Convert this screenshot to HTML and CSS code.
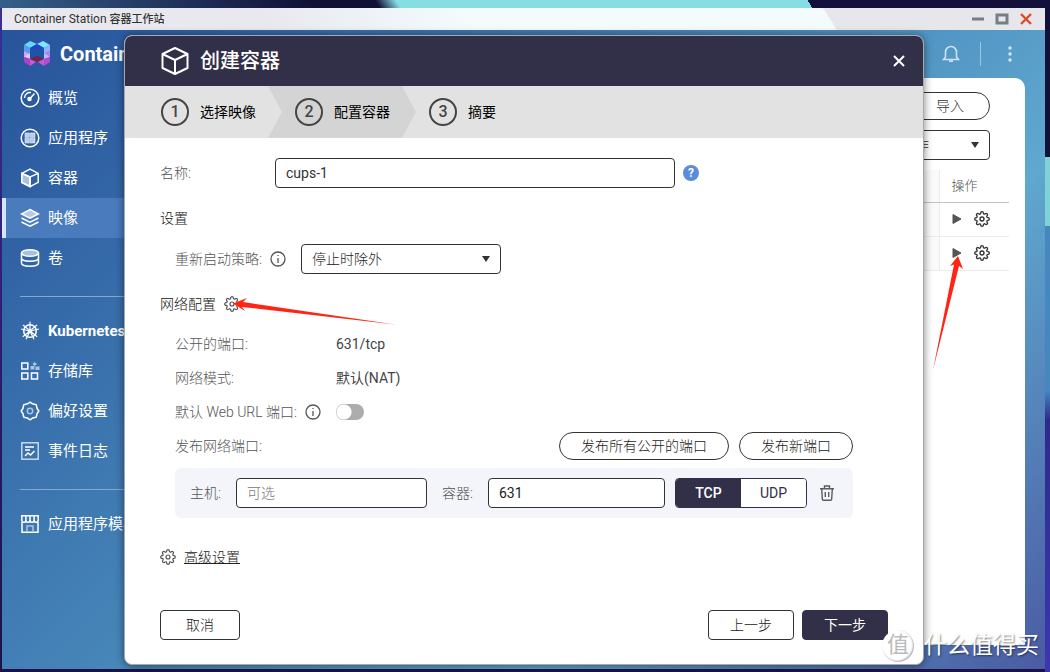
FILE: index.html
```html
<!DOCTYPE html>
<html lang="zh-CN">
<head>
  <meta charset="UTF-8" />
  <meta name="viewport" content="width=device-width, initial-scale=1.0"/>
  <title>Container Station 容器工作站</title>
  <link rel="stylesheet" href="styles.css">
</head>
<body>

  <!-- Shared icons -->
  <svg class="symbols" aria-hidden="true">
    <symbol id="gear" viewBox="0 0 24 24">
      <circle cx="12" cy="12" r="3"/>
      <path d="M19.4 15a1.65 1.65 0 0 0 .33 1.82l.06.06a2 2 0 0 1 0 2.83 2 2 0 0 1-2.83 0l-.06-.06a1.65 1.65 0 0 0-1.82-.33 1.65 1.65 0 0 0-1 1.51V21a2 2 0 0 1-2 2 2 2 0 0 1-2-2v-.09A1.65 1.65 0 0 0 9 19.4a1.65 1.65 0 0 0-1.82.33l-.06.06a2 2 0 0 1-2.83 0 2 2 0 0 1 0-2.83l.06-.06a1.65 1.65 0 0 0 .33-1.82 1.65 1.65 0 0 0-1.51-1H3a2 2 0 0 1-2-2 2 2 0 0 1 2-2h.09A1.65 1.65 0 0 0 4.6 9a1.65 1.65 0 0 0-.33-1.82l-.06-.06a2 2 0 0 1 0-2.83 2 2 0 0 1 2.83 0l.06.06a1.65 1.65 0 0 0 1.82.33H9a1.65 1.65 0 0 0 1-1.51V3a2 2 0 0 1 2-2 2 2 0 0 1 2 2v.09a1.65 1.65 0 0 0 1 1.51 1.65 1.65 0 0 0 1.82-.33l.06-.06a2 2 0 0 1 2.83 0 2 2 0 0 1 0 2.83l-.06.06a1.65 1.65 0 0 0-.33 1.82V9a1.65 1.65 0 0 0 1.51 1H21a2 2 0 0 1 2 2 2 2 0 0 1-2 2h-.09a1.65 1.65 0 0 0-1.51 1z"/>
    </symbol>
    <symbol id="info" viewBox="0 0 16 16">
      <circle cx="8" cy="8" r="7"/>
      <path d="M8 7v5M8 4v1"/>
    </symbol>
    <symbol id="play" viewBox="0 0 10 12">
      <path d="M1 1.500v9L9 6z"/>
    </symbol>
  </svg>

  <div class="window">
    <div class="titlebar">
      <span class="titlebar-text">Container Station <span class="titlebar-cn">容器工作站</span></span>
      <button class="win-btn" aria-label="最小化"><svg width="14" height="14" viewBox="0 0 14 14"><path d="M1 7h12" stroke="#787c85" stroke-width="3"/></svg></button>
      <button class="win-btn" aria-label="最大化"><svg width="14" height="14" viewBox="0 0 14 14"><rect x="2" y="3" width="10" height="8" fill="none" stroke="#787c85" stroke-width="3"/></svg></button>
      <button class="win-btn" aria-label="关闭"><svg width="14" height="14" viewBox="0 0 14 14"><path d="M2 2l10 10M12 2L2 12" stroke="#dc4b2b" stroke-width="2.400"/></svg></button>
    </div>

    <div class="app">
      <header class="app-header">
        <svg class="logo" width="28" height="28" viewBox="0 0 28 28">
          <path d="M1 5l6-4 7 3-7 4z" fill="#5fdcff"/>
          <path d="M14 4l6-3 7 4-6 3z" fill="#7ce6ff"/>
          <path d="M7 8l7-4 7 4-7 2z" fill="#1f45c8"/>
          <path d="M1 5l6 3v6l-6-3z" fill="#5a9cf5"/>
          <path d="M27 5l-6 3v6l6-3z" fill="#8fb4ff"/>
          <path d="M1 11l6 3-6 4z" fill="#c9a7f0"/>
          <path d="M7 9v10l-6-2 6-4z" fill="#e3c6f7"/>
          <path d="M27 11l-6 3 6 4z" fill="#a688ea"/>
          <path d="M21 9v10l6-2-6-4z" fill="#c8b3fa"/>
          <path d="M7 9l7 1 7-1v9H7z" fill="#1c54a6"/>
          <path d="M1 17l6 2v7l-6-4z" fill="#b03fc9"/>
          <path d="M27 17l-6 2v7l6-4z" fill="#b04ad0"/>
          <path d="M7 19l7-3 7 3-7 3z" fill="#7c1e48"/>
          <path d="M7 19v7l6-4zM21 19v7l-6-4z" fill="#c55ad8"/>
        </svg>
        <h1>Container Station</h1>
        <button class="icon-btn" aria-label="通知">
          <svg width="18" height="18" viewBox="0 0 18 18" fill="none" stroke="#d4e6f3" stroke-width="1.500"><path d="M3.500 12V7a5.500 5.500 0 0 1 11 0v5l2 2.500h-15zM7 16.200h4"/></svg>
        </button>
        <span class="header-divider"></span>
        <button class="icon-btn" aria-label="更多">
          <svg width="18" height="18" viewBox="0 0 18 18" fill="#d4e6f3"><circle cx="9" cy="3" r="1.700"/><circle cx="9" cy="9" r="1.700"/><circle cx="9" cy="15" r="1.700"/></svg>
        </button>
      </header>

      <div class="app-body">
        <nav>
          <a href="#"><svg viewBox="0 0 20 20"><circle cx="10" cy="10" r="8.800"/><path d="M4.500 10A5.500 5.500 0 0 1 11 4.600M10 10.500l4.500-5"/><circle cx="9.500" cy="11" r="1.500" fill="#fff"/></svg>概览</a>
          <a href="#"><svg viewBox="0 0 20 20"><circle cx="10" cy="10" r="8.800"/><g fill="#b9cde6" stroke="#e3ecf7" stroke-width=".6"><rect x="5" y="5" width="4.500" height="4.500"/><rect x="10.500" y="5" width="4.500" height="4.500"/><rect x="5" y="10.500" width="4.500" height="4.500"/><rect x="10.500" y="10.500" width="4.500" height="4.500"/></g></svg>应用程序</a>
          <a href="#"><svg viewBox="0 0 20 20"><path d="M1.800 5.500L10 9v9.500l-8.200-4z" fill="#a9c0de"/><path d="M10 1.200l8.200 4.200v9L10 18.700l-8.200-4.300v-9zM1.800 5.400L10 9l8.200-3.600M10 9v9.500"/></svg>容器</a>
          <a href="#" class="active"><svg viewBox="0 0 20 20"><path d="M10 1.500L18.500 6 10 10.200 1.500 6z" fill="#b4cae8"/><path d="M1.500 10l8.500 4.200L18.500 10M1.500 14l8.500 4.200 8.500-4.200"/></svg>映像</a>
          <a href="#"><svg viewBox="0 0 20 20"><ellipse cx="10" cy="5" rx="8.500" ry="3.300" fill="#a9c0de"/><path d="M1.500 5v10c0 4.300 17 4.300 17 0V5M1.500 10c0 4.300 17 4.300 17 0"/></svg>卷</a>
          <hr>
          <a href="#" class="latin"><svg viewBox="0 0 20 20"><circle cx="10" cy="10" r="6.300"/><circle cx="10" cy="10" r="1.500"/><path d="M10 .8v7.700M10 10l-8.900-2M10 10l8.900-2M10 10l-7.200 5.700M10 10l7.200 5.700M10 10l-4 8.300M10 10l4 8.300M3 4l5.500 4.500M17 4l-5.500 4.500" stroke-width="1.200"/></svg>Kubernetes</a>
          <a href="#"><svg viewBox="0 0 20 20"><rect x="1.800" y="2" width="6" height="6"/><rect x="1.800" y="12" width="6" height="6"/><rect x="11.500" y="12" width="6" height="6"/><path d="M14.500 1l2.500 2-2.500 2-2-2zM10.500 5h4v3.500h-4zM15.500 5.500h4V9h-4z" fill="#a9c6e2" stroke="none"/></svg>存储库</a>
          <a href="#"><svg viewBox="0 0 20 20"><path d="M10 1.200l2.500 1.600 3.700.9.900 3.800L18.800 10l-1.700 2.500-.9 3.700-3.700.9L10 18.800l-2.500-1.700-3.700-.9-.9-3.700L1.200 10l1.700-2.500.9-3.800 3.700-.9z" stroke-linejoin="round"/><circle cx="10" cy="10" r="2.700" stroke="#a9c6e2"/></svg>偏好设置</a>
          <a href="#"><svg viewBox="0 0 20 20"><rect x="1.800" y="1.800" width="16.400" height="16.400" stroke="#c6d9ec"/><path d="M5 6h9M5 9h5M5 15l3-3 2.500 2 4-4"/></svg>事件日志</a>
          <hr>
          <a href="#"><svg viewBox="0 0 20 20"><path d="M2 8v10.200h16V8M1.800 1.800h16.400V6c0 3-4 3-4.100 0 0 3-4.100 3-4.100 0 0 3-4.100 3-4.100 0C5.800 9 1.800 9 1.800 6zM5.900 2v4M10 2v4M14.100 2v4"/><path d="M7 18v-6h6v6" stroke="#a9c6e2"/></svg>应用程序模板</a>
        </nav>

        <main>
          <div class="toolbar">
            <button class="pill-btn">导入</button>
            <span class="select-box">
              <select aria-label="操作"><option>操作</option></select>
            </span>
          </div>
          <table>
            <thead>
              <tr><th></th><th class="col-action">操作</th></tr>
            </thead>
            <tbody>
              <tr>
                <td></td>
                <td class="col-action"><div class="row-actions">
                  <button class="icon-btn" aria-label="运行"><svg class="play" width="10" height="12"><use href="#play"/></svg></button>
                  <button class="icon-btn" aria-label="设置"><svg class="line-icon strong"><use href="#gear"/></svg></button>
                </div></td>
              </tr>
              <tr>
                <td></td>
                <td class="col-action"><div class="row-actions">
                  <button class="icon-btn" aria-label="运行"><svg class="play" width="10" height="12"><use href="#play"/></svg></button>
                  <button class="icon-btn" aria-label="设置"><svg class="line-icon strong"><use href="#gear"/></svg></button>
                </div></td>
              </tr>
            </tbody>
          </table>
        </main>
      </div>
    </div>

    <!-- Create container dialog -->
    <div class="overlay">
      <form class="modal" role="dialog" aria-labelledby="modal-title">
        <div class="modal-header">
          <svg width="30" height="30" viewBox="0 0 30 30" fill="none" stroke="#fff" stroke-width="2" stroke-linejoin="round"><path d="M15 2l12.500 6v14L15 28 2.500 22V8zM2.500 8L15 14l12.500-6M15 14v14"/></svg>
          <h2 id="modal-title">创建容器</h2>
          <button type="button" class="icon-btn" aria-label="关闭"><svg width="14" height="14" viewBox="0 0 14 14"><path d="M2 2l10 10M12 2L2 12" stroke="#fff" stroke-width="2"/></svg></button>
        </div>

        <ol class="steps">
          <li class="step"><span class="step-num">1</span>选择映像</li>
          <li class="step current"><span class="step-num">2</span>配置容器</li>
          <li class="step last"><span class="step-num">3</span>摘要</li>
        </ol>

        <div class="modal-body">
          <div class="row">
            <label class="name-label" for="name">名称:</label>
            <input class="name-input" id="name" type="text" value="cups-1">
            <span class="help">?</span>
          </div>

          <h3>设置</h3>
          <div class="row indent">
            <label for="restart">重新启动策略:</label>
            <svg class="line-icon info"><use href="#info"/></svg>
            <span class="select-box wide">
              <select id="restart"><option>停止时除外</option></select>
            </span>
          </div>

          <h3 class="network">网络配置
            <button type="button" class="icon-btn" aria-label="网络设置"><svg class="line-icon"><use href="#gear"/></svg></button>
          </h3>
          <div class="row info-row indent"><span class="key">公开的端口:</span><span class="value">631/tcp</span></div>
          <div class="row info-row indent"><span class="key">网络模式:</span><span class="value">默认(NAT)</span></div>
          <div class="row info-row indent">
            <label class="key" for="weburl">默认 Web URL 端口:
              <svg class="line-icon info"><use href="#info"/></svg>
            </label>
            <input class="toggle" id="weburl" type="checkbox">
          </div>
          <div class="row publish indent">
            <span class="publish-label">发布网络端口:</span>
            <button type="button" class="pill-btn publish-all">发布所有公开的端口</button>
            <button type="button" class="pill-btn">发布新端口</button>
          </div>

          <div class="port-row">
            <label for="host">主机:</label>
            <input id="host" type="text" placeholder="可选">
            <label for="port">容器:</label>
            <input class="port-input" id="port" type="text" value="631">
            <div class="protocol">
              <button type="button" class="on">TCP</button>
              <button type="button">UDP</button>
            </div>
            <button type="button" class="icon-btn" aria-label="删除">
              <svg width="16" height="16" viewBox="0 0 16 16" fill="none" stroke="#5c5c5c" stroke-width="1.400"><path d="M1 3.700h14M5.500 3.500V1h5v2.500M2.700 4l.6 10c0 .8.500 1.200 1.200 1.200h7c.7 0 1.200-.4 1.200-1.200l.6-10M6.300 7v5M9.700 7v5"/></svg>
            </button>
          </div>

          <div class="advanced">
            <svg class="line-icon"><use href="#gear"/></svg>
            <a href="#">高级设置</a>
          </div>
        </div>

        <div class="modal-footer">
          <button type="button" class="btn cancel">取消</button>
          <button type="button" class="btn">上一步</button>
          <button type="button" class="btn primary">下一步</button>
        </div>
      </form>
    </div>
  </div>

  <!-- Annotation arrows -->
  <svg class="arrow arrow-network" width="164" height="30" viewBox="0 0 164 30"><path d="M1 7.500L15 2l-4 4 152 22.500L10 11l3 4z" fill="#ff2413"/></svg>
  <svg class="arrow arrow-run" width="32" height="116" viewBox="0 0 32 116"><path d="M27 1l5 13-4-3L2 115 23 9.500 19 11z" fill="#ff2413"/></svg>

  <div class="watermark"><span class="watermark-badge">值</span>什么值得买</div>

</body>
</html>
```
FILE: styles.css
```css
* {
  box-sizing: border-box;
}
body {
  margin: 0;
  padding: 8px 5px 3px 2px;
  min-height: 100vh;
  display: flex;
  position: relative;
  overflow: hidden;
  font-family: Roboto, "Noto Sans CJK SC", sans-serif;
  font-size: 14px;
  line-height: 20px;
  color: #333;
  background:
    linear-gradient(#14103c 0 157px, #7fd3d6 157px 226px, #4688bd 226px 390px, #2e2a8c 420px, #3b37b0) right / 5px 100% no-repeat,
    linear-gradient(58deg, #35608a, #101036 30%, #101036 36%, #86dde4 38%, #86dde4 77%, #14103c 77%) top / 100% 8px no-repeat,
    linear-gradient(#3a2f96, #2a1a66 60%, #1d1248);
}
button,
input,
select {
  font: inherit;
  color: inherit;
  margin: 0;
}
button {
  padding: 0;
  cursor: pointer;
}
.symbols {
  position: absolute;
  width: 0;
  height: 0;
}
.icon-btn,
.win-btn {
  display: flex;
  border: none;
  background: none;
}

/* Window */
.window {
  position: relative;
  flex: 1;
  min-width: 0;
  display: flex;
  flex-direction: column;
}
.titlebar {
  display: flex;
  align-items: center;
  gap: 10px;
  height: 22px;
  padding: 0 12px;
  background: linear-gradient(58deg, #e8e8ee 25%, #f3fbfd 45%, #f3fbfd 79%, #e6e6eb 79%);
  font-size: 12px;
}
.titlebar-text {
  flex: 1;
}
.titlebar-cn {
  font-size: 11px;
  font-weight: 500;
}
.app {
  flex: 1;
  display: flex;
  flex-direction: column;
  background: linear-gradient(135deg, #27539b, #4685b8 43%, #5fa8d0 70%, #4a5ba2);
}
.app-header {
  display: flex;
  align-items: center;
  height: 48px;
  padding: 0 26px 0 21px;
}
.app-header h1 {
  width: 100px;
  margin: 0 auto 0 9px;
  overflow: hidden;
  white-space: nowrap;
  font-size: 20px;
  font-weight: 700;
  color: #fff;
}
.header-divider {
  width: 1px;
  height: 24px;
  margin: 0 20px;
  background: #9cc6e0;
}
.app-body {
  flex: 1;
  display: flex;
  padding: 0 20px 24px 0;
}

/* Sidebar */
nav {
  width: 200px;
}
nav a {
  display: flex;
  align-items: center;
  gap: 8px;
  height: 40px;
  padding-left: 18px;
  font-size: 15px;
  color: #fff;
  text-decoration: none;
  white-space: nowrap;
}
nav a.latin {
  font-weight: 700;
}
nav a.active {
  padding-left: 14px;
  border-left: 4px solid #d3e6fb;
  background: #4a7bbd;
}
nav svg {
  width: 20px;
  height: 20px;
  fill: none;
  stroke: #fff;
  stroke-width: 1.5;
}
nav hr {
  height: 1px;
  margin: 18px 0 14px 18px;
  border: none;
  background: #83a9d0;
}

/* Image list */
main {
  flex: 1;
  padding: 14px 16px;
  border-radius: 0 10px 0 0;
  background: #fff;
}
.toolbar {
  display: flex;
  flex-direction: column;
  align-items: flex-end;
  gap: 10px;
  padding-right: 19px;
}
.toolbar .pill-btn {
  width: 80px;
}
.toolbar .select-box {
  width: 100px;
}
table {
  width: 100%;
  margin-top: 10px;
  border-collapse: collapse;
  font-size: 13px;
}
th,
td {
  height: 34px;
  padding: 0;
  background: #fafafa;
  border-bottom: 1px solid #ebebeb;
}
th {
  height: 32px;
  border-bottom-color: #c2c2c2;
  font-weight: 300;
  text-align: left;
  color: #555;
}
.col-action {
  width: 70px;
  padding-left: 12px;
  border-left: 1px solid #ebebeb;
  background: #fff;
}
.row-actions {
  display: flex;
  align-items: center;
  gap: 12px;
}
.play {
  fill: #555;
  stroke: #555;
}
.line-icon {
  width: 16px;
  height: 16px;
  fill: none;
  stroke: #555;
  stroke-width: 1.8;
}
.line-icon.strong {
  stroke: #333;
  stroke-width: 2;
}
.line-icon.info {
  stroke-width: 1.3;
}

/* Form controls */
.pill-btn {
  height: 28px;
  padding: 0 21px;
  border: 1px solid #333;
  border-radius: 14px;
  background: #fff;
  font-weight: 300;
}
.select-box {
  position: relative;
}
.select-box select {
  appearance: none;
  display: block;
  width: 100%;
  height: 30px;
  padding: 0 10px;
  border: 1px solid #333;
  border-radius: 4px;
  background: #fff;
  font-weight: 300;
}
.select-box::after {
  content: "";
  position: absolute;
  right: 11px;
  top: 12px;
  border: 4px solid transparent;
  border-top: 6px solid #333;
  border-bottom: none;
}
input[type="text"] {
  height: 30px;
  min-width: 0;
  padding: 0 10px;
  border: 1px solid #333;
  border-radius: 4px;
  background: #fff;
}
input::placeholder {
  color: #777;
  font-weight: 300;
}
.toggle {
  appearance: none;
  width: 28px;
  height: 16px;
  border-radius: 8px;
  background: radial-gradient(circle at 8px 8px, #fff 7px, #adadad 8px);
}

/* Dialog */
.overlay {
  position: absolute;
  inset: 0;
  display: flex;
  justify-content: center;
  padding: 27px 0 4px 1px;
}
.modal {
  width: 800px;
  display: flex;
  flex-direction: column;
  overflow: hidden;
  border: 1px solid #a9a9a9;
  border-radius: 8px;
  background: #fff;
  box-shadow: 0 1px 8px rgba(0, 0, 0, 0.5);
}
.modal-header {
  display: flex;
  align-items: center;
  gap: 10px;
  height: 50px;
  padding: 0 17px 0 35px;
  background: #322f48;
  color: #fff;
}
.modal-header h2 {
  flex: 1;
  margin: 0;
  font-size: 20px;
  font-weight: 500;
}
.steps {
  display: flex;
  height: 52px;
  margin: 0;
  padding: 0;
  list-style: none;
  background: #e2e2e2;
  color: #000;
}
.step {
  position: relative;
  z-index: 1;
  display: flex;
  align-items: center;
  gap: 11px;
  padding: 0 26px 0 36px;
  background: #e2e2e2;
  clip-path: polygon(0 0, calc(100% - 14px) 0, 100% 50%, calc(100% - 14px) 100%, 0 100%);
}
.step.current,
.step.last {
  z-index: 0;
  margin-left: -14px;
  padding-left: 27px;
}
.step.current {
  background: #d4d4d4;
}
.step.last {
  background: none;
}
.step-num {
  width: 28px;
  height: 28px;
  border: 2px solid #444;
  border-radius: 50%;
  font-size: 16px;
  font-weight: 500;
  line-height: 24px;
  text-align: center;
  color: #444;
}
.modal-body {
  flex: 1;
  padding: 20px 70px 0 35px;
  color: #555;
}
.row {
  display: flex;
  align-items: center;
}
.indent {
  padding-left: 15px;
}
.modal-body label,
.key,
.value,
.publish-label {
  font-weight: 300;
}
.name-label {
  width: 115px;
}
.name-input {
  width: 400px;
  color: #333;
}
.help {
  width: 16px;
  height: 16px;
  margin-left: 8px;
  border-radius: 50%;
  background: #5b8bdc;
  color: #fff;
  font-size: 12px;
  font-weight: 700;
  line-height: 16px;
  text-align: center;
}
h3 {
  display: flex;
  align-items: center;
  gap: 8px;
  height: 28px;
  margin: 16px 0 12px;
  font-size: 14px;
  font-weight: 300;
  color: #111;
}
h3.network {
  margin-bottom: 9px;
}
.row .info {
  margin-left: 8px;
}
.select-box.wide {
  width: 200px;
  margin-left: 15px;
  color: #222;
}
.info-row {
  height: 34px;
}
.key {
  display: flex;
  align-items: center;
  width: 161px;
}
.value {
  color: #444;
  font-weight: 400;
}
.publish {
  gap: 10px;
  margin-top: 3px;
}
.publish .pill-btn {
  color: #222;
}
.publish-label {
  flex: 1;
}
.port-row {
  display: flex;
  align-items: center;
  height: 50px;
  margin: 8px 0 0 15px;
  padding: 0 18px 0 15px;
  border-radius: 6px;
  background: #f4f5fb;
}
.port-row label {
  width: 46px;
}
.port-row input {
  width: 191px;
  margin-right: 15px;
  color: #222;
}
.port-row .port-input {
  width: 177px;
  margin-right: 10px;
}
.protocol {
  display: flex;
  width: 132px;
  height: 30px;
  margin-right: 12px;
  overflow: hidden;
  border: 1px solid #322f48;
  border-radius: 4px;
}
.protocol button {
  flex: 1;
  border: none;
  background: #fff;
  color: #322f48;
}
.protocol .on {
  background: #322f48;
  color: #fff;
  font-weight: 500;
}
.advanced {
  display: flex;
  align-items: center;
  gap: 8px;
  height: 28px;
  margin-top: 25px;
}
.advanced a {
  color: #222;
  font-weight: 300;
}
.modal-footer {
  display: flex;
  gap: 8px;
  padding: 0 35px 24px;
}
.btn {
  width: 86px;
  height: 30px;
  border: 1px solid #333;
  border-radius: 4px;
  background: #fff;
  color: #222;
  font-weight: 300;
}
.btn.cancel {
  width: 80px;
  margin-right: auto;
}
.btn.primary {
  border-color: #322f48;
  background: #322f48;
  color: #fff;
  font-weight: 400;
}

/* Marks drawn over the window */
.arrow {
  position: absolute;
}
.arrow-network {
  left: 232px;
  top: 296px;
}
.arrow-run {
  left: 931px;
  top: 255px;
}
.watermark {
  position: absolute;
  right: 11px;
  bottom: 10px;
  display: flex;
  align-items: center;
  gap: 10px;
  font-size: 23px;
  line-height: 32px;
  color: #fff;
  text-shadow: 1px 1px 2px rgba(0, 0, 0, 0.5);
}
.watermark-badge {
  width: 32px;
  height: 32px;
  border-radius: 50%;
  background: #fff;
  box-shadow: inset -1px -1px 2px #aaa;
  color: #bbb;
  font-size: 22px;
  line-height: 30px;
  text-align: center;
  text-shadow: none;
}
```
